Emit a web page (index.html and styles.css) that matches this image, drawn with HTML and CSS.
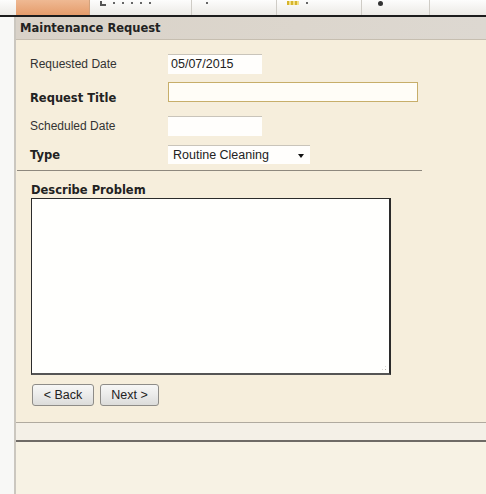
FILE: index.html
```html
<!DOCTYPE html>
<html lang="en">
<head>
<meta charset="utf-8">
<title>Maintenance Request</title>
<link rel="stylesheet" href="styles.css">
</head>
<body>
  <div class="tabbar">
    <div class="tab tab-active"></div>
    <div class="tab tab-1"><span class="glyph g-q"></span><span class="dot"></span><span class="dot"></span><span class="dot"></span><span class="dot"></span><span class="dot"></span></div>
    <div class="tab tab-2"><span class="dot"></span></div>
    <div class="tab tab-3"><span class="glyph g-bars"></span><span class="dot"></span></div>
    <div class="tab tab-4"><span class="glyph g-dot"></span></div>
    <div class="tab tab-5"></div>
  </div>

  <div class="frame">
    <div class="header">Maintenance Request</div>

    <div class="panel">
      <div class="row row-date">
        <label class="label">Requested Date</label>
        <div class="field field-short">05/07/2015</div>
      </div>
      <div class="row row-title">
        <label class="label label-bold label-low">Request Title</label>
        <div class="field field-long field-required"></div>
      </div>
      <div class="row row-sched">
        <label class="label">Scheduled Date</label>
        <div class="field field-short"></div>
      </div>
      <div class="row row-type">
        <label class="label label-bold">Type</label>
        <div class="field field-select">
          <span>Routine Cleaning</span>
          <span class="caret"></span>
        </div>
      </div>

      <div class="divider"></div>

      <div class="describe">
        <div class="label label-bold">Describe Problem</div>
        <div class="textarea"><span class="grip"></span></div>
      </div>

      <div class="buttons">
        <button class="btn">&lt; Back</button>
        <button class="btn">Next &gt;</button>
      </div>
    </div>

    <div class="status"></div>
    <div class="bottom"></div>
  </div>
</body>
</html>
```

FILE: styles.css
```css
html, body {
  margin: 0;
  height: 100%;
}

body {
  background: #f8f8f6;
  font-family: "Liberation Sans", Arial, sans-serif;
  font-size: 12px;
  color: #2a2a2a;
  display: flex;
  flex-direction: column;
  overflow: hidden;
}

/* tab strip along the top, mostly scrolled out of view */
.tabbar {
  height: 15px;
  flex: 0 0 auto;
  display: flex;
  background: linear-gradient(#fdfdfc, #eceae6);
  border-bottom: 2px solid #1c1c1c;
  padding-left: 16px;
  overflow: hidden;
}

.tab {
  height: 100%;
  border-right: 1px solid #cfccc6;
  display: flex;
  align-items: flex-start;
  gap: 7px;
  padding: 1px 0 0 10px;
  box-sizing: border-box;
}

.tab-active {
  width: 74px;
  background: linear-gradient(#efb993, #e59c6b);
  border-right: 1px solid #d1a27e;
}
.tab-1 { width: 102px; }
.tab-2 { width: 85px; padding-left: 14px; }
.tab-3 { width: 85px; }
.tab-4 { width: 68px; }
.tab-5 { flex: 1; border-right: none; }

.dot {
  width: 2px;
  height: 2px;
  margin-top: 1px;
  background: #666;
}

.glyph {
  display: inline-block;
}
.g-q {
  width: 4px;
  height: 3px;
  border-left: 2px solid #555;
  border-bottom: 2px solid #555;
}
.g-bars {
  width: 12px;
  height: 4px;
  background: repeating-linear-gradient(90deg, #d6b42c 0 2px, #f2e08a 2px 4px);
}
.g-dot {
  width: 5px;
  height: 5px;
  border-radius: 50%;
  background: #333;
  margin-left: 6px;
}

/* the window body */
.frame {
  flex: 1;
  margin-left: 14px;
  border-left: 2px solid #cbc7bf;
  display: flex;
  flex-direction: column;
}

.header {
  height: 22px;
  line-height: 22px;
  padding-left: 4px;
  background: linear-gradient(90deg, #d9d2c8 0%, #dcd6cd 60%, #ddd8d1 100%);
  border-bottom: 1px solid #c6beb0;
  font-family: "DejaVu Sans", Verdana, sans-serif;
  font-weight: bold;
  font-size: 11.5px;
  color: #222;
}

.panel {
  height: 383px;
  box-sizing: border-box;
  background: #f6eedc;
  border-bottom: 1px solid #b0aa9f;
  padding: 14px 0 0 14px;
  display: flex;
  flex-direction: column;
}

.row {
  display: flex;
  align-items: center;
  height: 20px;
}
.row-title { margin-top: 8px; }
.row-sched { margin-top: 14px; }
.row-type { margin-top: 9px; height: 19px; }

.label {
  width: 138px;
  flex: 0 0 auto;
  color: #333;
  font-size: 12px;
}

.label-bold {
  font-family: "DejaVu Sans", Verdana, sans-serif;
  font-weight: bold;
  font-size: 11.5px;
  color: #222;
}

/* sits a little below its box */
.label-low {
  align-self: flex-end;
  line-height: 14px;
  margin-bottom: -3px;
}

.field {
  box-sizing: border-box;
  background: #fffefc;
  border-top: 1px solid #c9c4ba;
  height: 20px;
  padding-left: 3px;
  font-size: 12.5px;
  line-height: 19px;
  color: #222;
}

.field-short { width: 94px; }

.field-long { width: 250px; }

.field-required {
  border: 1px solid #c7ae6a;
  background: #fffdf7;
}

.field-select {
  width: 142px;
  height: 19px;
  display: flex;
  align-items: center;
  justify-content: space-between;
  padding-left: 5px;
  padding-right: 6px;
  line-height: 18px;
}

.caret {
  width: 0;
  height: 0;
  border-left: 3px solid transparent;
  border-right: 3px solid transparent;
  border-top: 4px solid #111;
  margin-top: 2px;
}

.divider {
  height: 1px;
  background: #8e887e;
  width: 405px;
  margin: 6px 0 0 -13px;
}

.describe {
  margin-top: 12px;
  margin-left: 1px;
  display: flex;
  flex-direction: column;
}

.describe .label {
  width: auto;
  line-height: 15px;
}

.textarea {
  position: relative;
  width: 360px;
  height: 177px;
  box-sizing: border-box;
  background: #fffffd;
  border: 1px solid #2b2b2b;
  border-right-width: 2px;
  border-bottom-width: 2px;
  border-bottom-color: #555;
}

/* resize grip in the bottom-right corner */
.grip {
  position: absolute;
  right: 2px;
  bottom: 2px;
  width: 6px;
  height: 6px;
  background:
    radial-gradient(circle, #b8b4ac 0.8px, transparent 1px) 0 0 / 3px 3px;
  clip-path: polygon(100% 0, 100% 100%, 0 100%);
}

.buttons {
  display: flex;
  gap: 6px;
  margin-top: 9px;
  margin-left: 2px;
}

.btn {
  width: 62px;
  height: 22px;
  box-sizing: border-box;
  border: 1px solid #8e8c88;
  border-radius: 3px;
  background: linear-gradient(#f7f7f6 0%, #ebebea 50%, #dcdcda 100%);
  font-family: "Liberation Sans", Arial, sans-serif;
  font-size: 12.5px;
  color: #222;
  padding: 0;
}
.btn + .btn { width: 59px; }

.status {
  height: 17px;
  background: #f4f0e7;
  border-bottom: 2px solid #6f6b66;
}

.bottom {
  flex: 1;
  background: #f7f2e4;
}
```
